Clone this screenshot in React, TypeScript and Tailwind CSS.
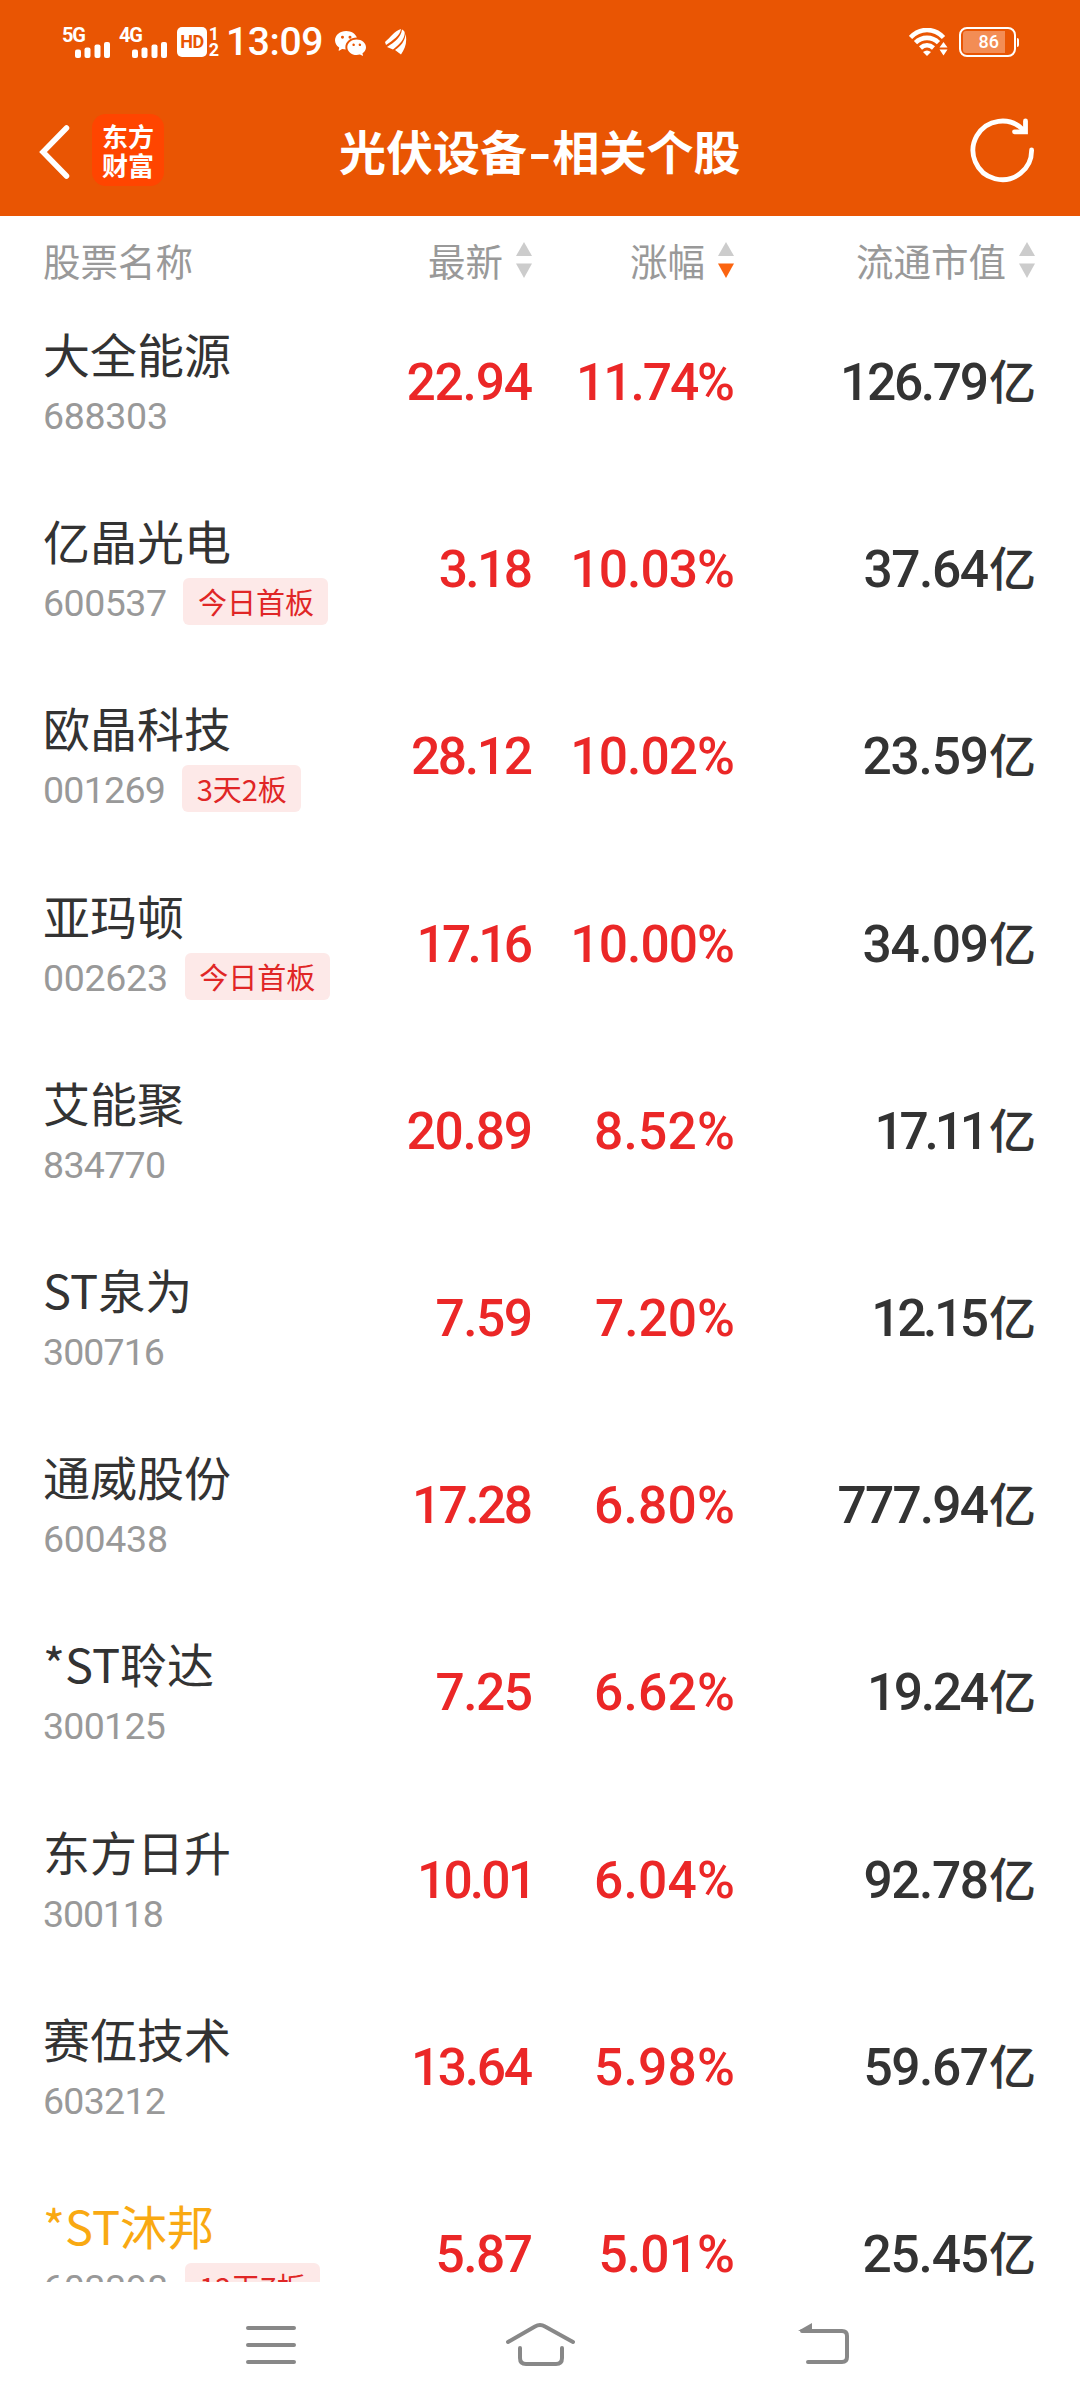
import { BsWechat } from "react-icons/bs";

type Stock = {
  name: string;
  code: string;
  tag?: string;
  price: string;
  change: string;
  cap: string;
  highlight?: boolean;
};

const STOCKS: Stock[] = [
  { name: "大全能源", code: "688303", price: "22.94", change: "11.74%", cap: "126.79" },
  { name: "亿晶光电", code: "600537", tag: "今日首板", price: "3.18", change: "10.03%", cap: "37.64" },
  { name: "欧晶科技", code: "001269", tag: "3天2板", price: "28.12", change: "10.02%", cap: "23.59" },
  { name: "亚玛顿", code: "002623", tag: "今日首板", price: "17.16", change: "10.00%", cap: "34.09" },
  { name: "艾能聚", code: "834770", price: "20.89", change: "8.52%", cap: "17.11" },
  { name: "ST泉为", code: "300716", price: "7.59", change: "7.20%", cap: "12.15" },
  { name: "通威股份", code: "600438", price: "17.28", change: "6.80%", cap: "777.94" },
  { name: "*ST聆达", code: "300125", price: "7.25", change: "6.62%", cap: "19.24" },
  { name: "东方日升", code: "300118", price: "10.01", change: "6.04%", cap: "92.78" },
  { name: "赛伍技术", code: "603212", price: "13.64", change: "5.98%", cap: "59.67" },
  { name: "*ST沐邦", code: "603398", tag: "12天7板", price: "5.87", change: "5.01%", cap: "25.45", highlight: true },
];

const GRID = "grid grid-cols-[290px_200px_202px_301px] pl-[43px]";

/* Tracking for a figure, so that 1 and 7 take less room than other digits. */
function figureTracking(text: string) {
  let delta = 0;
  for (const c of text) {
    if (c === "1") delta -= 6.8;
    else if (c === "7") delta -= 2.5;
    else if (c === "%") delta += 6;
    else delta -= 1.2;
  }
  if (text.endsWith("1")) delta += 3;
  return delta / text.length;
}

function codeTracking(text: string) {
  let delta = 0;
  for (const c of text) {
    if (c === "1") delta -= 2.8;
    else if (c === "7") delta -= 1.5;
    else delta -= 0.3;
  }
  return delta / text.length;
}

function Figure({ text, flush = true }: { text: string; flush?: boolean }) {
  const ls = figureTracking(text);
  const bearing = flush && text.endsWith("1") ? 4 : 0;
  return (
    <span
      className="inline-block font-['Roboto','Noto_Sans_CJK_SC',sans-serif] text-[51.5px] leading-[60px] font-medium"
      style={{ letterSpacing: ls, marginRight: -ls - bearing }}
    >
      {text}
    </span>
  );
}

function Sort({ down = false }: { down?: boolean }) {
  return (
    <svg width="16" height="36" viewBox="0 0 16 36" className="shrink-0">
      <path d="M8 0L16 14H0Z" fill="#ccc" />
      <path d="M8 36L0 21.500H16Z" fill={down ? "#fb6410" : "#ccc"} />
    </svg>
  );
}

function Head({ label, down }: { label: string; down?: boolean }) {
  return (
    <div className="flex items-center justify-end gap-[13px] pr-[1px]">
      <span>{label}</span>
      <Sort down={down} />
    </div>
  );
}

function Signal({ label }: { label: string }) {
  return (
    <svg width="50" height="36" viewBox="0 -2 50 36" fill="#fff" className="shrink-0 overflow-visible">
      <text x="-1" y="15.500" className="font-['Roboto',sans-serif] text-[20px] font-bold" textLength="24">
        {label}
      </text>
      <rect x="12" y="23.500" width="6" height="8.500" rx="2" />
      <rect x="21.500" y="21.500" width="6" height="10.500" rx="2" />
      <rect x="31.500" y="18.500" width="6" height="13.500" rx="2" />
      <rect x="41" y="16" width="6" height="16" rx="2" />
    </svg>
  );
}

function StatusBar() {
  return (
    <div className="flex h-[84px] items-center pl-[63px] pr-[61px] text-white">
      <Signal label="5G" />
      <div className="ml-[7px] flex">
        <Signal label="4G" />
      </div>
      <div className="ml-[7px] flex h-[30px] w-[30px] items-center justify-center rounded-[5px] bg-white font-['Roboto',sans-serif] text-[18px] leading-none font-bold tracking-[-0.5px] text-[#e95503]">
        HD
      </div>
      <div className="ml-[2px] flex w-[10px] flex-col items-center font-['Roboto',sans-serif] text-[18px] leading-[16px] font-bold">
        <span>1</span>
        <span>2</span>
      </div>
      <div className="ml-[7px] w-[97px] font-['Roboto',sans-serif] text-[39px] leading-[46px] font-medium tracking-[-0.4px]">13:09</div>
      <BsWechat className="ml-[12px] h-[31px] w-[31px]" />
      <svg width="22" height="26" viewBox="0 0 22 26" className="ml-[19px]" fill="#fff">
        <path d="M0 13C6 8 9 2 16 0C15 7 8 11 1 16Z" />
        <path d="M2 18C10 13 16 8 17 0.500C20 2 20 4 19.500 6C18 13 12 17 8 20.500Z" />
        <path d="M10 21C16 17 20 12 20.500 5C22.500 13 20 20 16 25.500Z" />
      </svg>
      <svg width="40" height="28" viewBox="0 0 40 28" className="ml-auto" fill="none" stroke="#fff" strokeWidth="4.600">
        <path d="M1.500 9.500C11 -0.500 25 -0.500 34.500 9.500" />
        <path d="M6.500 14.700C13 8.200 23 8.200 29.500 14.700" />
        <path d="M11.500 20C15.500 16.500 20.500 16.500 24.500 20" />
        <path d="M14 24Q18 21 22 24L18 28Z" fill="#fff" stroke="none" />
        <path d="M34.500 14L38.500 19.500H30.500Z M34.500 27.500L38.500 21.500H30.500Z" fill="#fff" stroke="none" />
      </svg>
      <div className="ml-[10px] flex h-[30px] w-[57px] items-center rounded-[8px] border-[2.5px] border-white p-[2px]">
        <div className="flex h-full w-[42px] items-center justify-end rounded-l-[3px] bg-[#f38d55] pr-[6px] font-['Roboto',sans-serif] text-[18px] leading-none font-medium">
          86
        </div>
      </div>
      <div className="ml-[1px] h-[9px] w-[2px] rounded-r bg-white" />
    </div>
  );
}

function TitleBar() {
  return (
    <div className="flex h-[132px] items-center pr-[44px] pl-[38px]">
      <svg width="34" height="56" viewBox="0 0 34 56" fill="none" stroke="#fff" strokeWidth="5.500" className="mt-[2px]">
        <path d="M28.500 5L5 29L28.500 53" strokeLinecap="round" strokeLinejoin="miter" />
      </svg>
      <div className="ml-[20px] flex h-[72px] w-[72px] flex-col items-center justify-center rounded-[14px] bg-[#ff4500] font-['Noto_Sans_CJK_SC',sans-serif] text-[26px] leading-[29px] font-bold text-white">
        <span>东方</span>
        <span>财富</span>
      </div>
      <h1 className="ml-[175px] font-['Noto_Sans_CJK_SC',sans-serif] text-[47px] leading-[60px] font-bold whitespace-nowrap text-white">
        光伏设备<span className="inline-block origin-center scale-x-135 px-[4px]">-</span>相关个股
      </h1>
      <svg width="68" height="68" viewBox="0 0 68 68" fill="none" stroke="#fff" strokeWidth="4.800" strokeLinecap="round" className="ml-auto">
        <path d="M63.600 34A29.300 29.300 0 1 1 55 13.600" />
        <path d="M57.500 5V15.800H46.500" />
      </svg>
    </div>
  );
}

function Row({ stock }: { stock: Stock }) {
  return (
    <div className={`${GRID} h-[187.2px]`}>
      <div className="flex flex-col pt-[20px]">
        <div
          className={`font-['Noto_Sans_CJK_SC',sans-serif] text-[47px] leading-[60px] whitespace-nowrap ${
            stock.highlight ? "text-[#f9a912]" : "text-[#333]"
          }`}
        >
          {stock.name}
        </div>
        <div className="mt-[8px] flex h-[47px] items-center">
          <span
            className="pt-[4px] font-['Roboto',sans-serif] text-[37.5px] leading-[47px] text-[#999]"
            style={{ letterSpacing: codeTracking(stock.code) }}
          >
            {stock.code}
          </span>
          {stock.tag && (
            <span className="ml-[17px] flex h-[47px] items-center rounded-[6px] bg-[#fde9e8] px-[14.500px] font-['Noto_Sans_CJK_SC',sans-serif] text-[29px] leading-none whitespace-nowrap text-[#e02626]">
              {stock.tag}
            </span>
          )}
        </div>
      </div>
      <div className="pt-[50px] text-right text-[#eb2727]">
        <Figure text={stock.price} />
      </div>
      <div className="pt-[50px] text-right text-[#eb2727]">
        <Figure text={stock.change} />
      </div>
      <div className="flex items-start justify-end pt-[46px] text-[#333]">
        <div className="pt-[4px]">
          <Figure text={stock.cap} flush={false} />
        </div>
        <span className="font-['Noto_Sans_CJK_SC',sans-serif] text-[47px] leading-[60px] font-medium">亿</span>
      </div>
    </div>
  );
}

function NavBar() {
  return (
    <div className="flex h-[126px] items-start bg-white pt-[38px]">
      <svg width="52" height="44" viewBox="0 0 52 44" className="ml-[244px]" stroke="#888" strokeWidth="4" strokeLinecap="round">
        <path d="M4 8H50M4 25H50M4 42H50" />
      </svg>
      <svg width="72" height="48" viewBox="0 0 72 48" className="ml-[208px]" fill="none" stroke="#888" strokeWidth="4" strokeLinecap="round">
        <path d="M4 22L31 6.500Q36 3.500 41 6.500L69 22" />
        <path d="M16 28V38Q16 44 22 44H52Q58 44 58 38V28" />
      </svg>
      <svg width="54" height="46" viewBox="0 0 54 46" className="ml-[220px]" fill="none" stroke="#888" strokeWidth="4" strokeLinecap="round">
        <path d="M6 11H46Q51 11 51 16V37Q51 42 46 42H12" />
        <path d="M2 11L16 3V11Z" fill="#888" stroke="none" />
      </svg>
    </div>
  );
}

export default function App() {
  return (
    <div className="flex h-[2408px] w-[1080px] flex-col overflow-hidden bg-white">
      <header className="h-[216px] shrink-0 bg-[#e95503]">
        <StatusBar />
        <TitleBar />
      </header>
      <div className={`${GRID} h-[87px] shrink-0 items-center font-['Noto_Sans_CJK_SC',sans-serif] text-[37.5px] leading-[60px] text-[#999]`}>
        <span>股票名称</span>
        <Head label="最新" />
        <Head label="涨幅" down />
        <Head label="流通市值" />
      </div>
      <main className="min-h-0 flex-1 overflow-hidden">
        {STOCKS.map((s) => (
          <Row key={s.code} stock={s} />
        ))}
      </main>
      <NavBar />
    </div>
  );
}
